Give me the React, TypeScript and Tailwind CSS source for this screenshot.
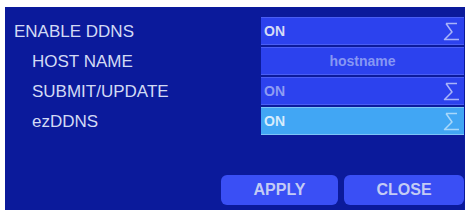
import React from "react";

const Sigma = ({ color }: { color: string }) => (
  <svg width="18" height="19" viewBox="0 0 18 19" fill="none">
    <path d="M3 1.5 H14 M3 1.5 L9 10 L1.5 17.5 H16" stroke={color} strokeWidth="1.5" strokeLinejoin="round" />
  </svg>
);

const Field = ({
  children,
  active,
  center,
  icon,
}: {
  children: React.ReactNode;
  active?: boolean;
  center?: boolean;
  icon?: boolean;
}) => (
  <div
    className={`h-[28px] flex items-center border-t border-b ${
      active ? "bg-[#41a6f4] border-[#7cc4f8]" : "bg-[#2c42ee] border-[#4a5ef4]"
    } ${center ? "justify-center" : "justify-between pl-[3px] pr-[3px]"}`}
  >
    {children}
    {icon && <Sigma color={active ? "#a8d8fa" : "#a9b4f8"} />}
  </div>
);

export default function App() {
  const label = "text-[17px] text-[#d3daf5] leading-none";
  return (
    <div className="w-[465px] h-[212px] bg-white pt-[7px] pl-[5px]" style={{ fontFamily: '"Liberation Sans", Arial, sans-serif' }}>
      <div className="w-[460px] h-[203px] bg-[#0b1a9b] flex flex-col pt-[10px]">
        <div className="grid grid-cols-[256px_203px] gap-y-[2px]">
          <div className={`${label} flex items-center pl-[9px]`}>ENABLE DDNS</div>
          <Field icon>
            <span className="text-[14px] font-bold text-[#d5dbf6]">ON</span>
          </Field>
          <div className={`${label} flex items-center pl-[27px]`}>HOST NAME</div>
          <Field center>
            <span className="text-[14px] font-bold text-[#8797f4]">hostname</span>
          </Field>
          <div className={`${label} flex items-center pl-[27px]`}>SUBMIT/UPDATE</div>
          <Field icon>
            <span className="text-[14px] font-bold text-[#8e9cf3]">ON</span>
          </Field>
          <div className={`${label} flex items-center pl-[27px]`}>ezDDNS</div>
          <Field icon active>
            <span className="text-[14px] font-bold text-[#d6ecfc]">ON</span>
          </Field>
        </div>
        <div className="flex-1" />
        <div className="flex justify-end gap-[6px] pr-[1px] pb-[5px]">
          <button className="w-[117px] h-[30px] rounded-[6px] bg-[#3a4ff5] text-[16px] font-bold text-[#c3cbf4]">APPLY</button>
          <button className="w-[120px] h-[30px] rounded-[6px] bg-[#3a4ff5] text-[16px] font-bold text-[#c3cbf4]">CLOSE</button>
        </div>
      </div>
    </div>
  );
}
